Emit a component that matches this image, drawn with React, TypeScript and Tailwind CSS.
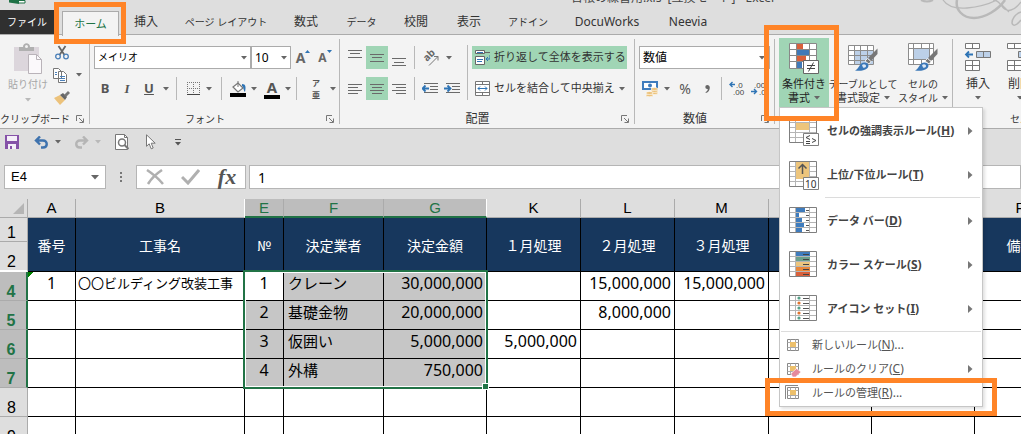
import type { ReactNode } from 'react';
import clsx from 'clsx';

const tabs = [
  { label: '挿入', className: 'w-[54px] text-xs' },
  { label: 'ページ レイアウト', className: 'w-[106px] text-[10px]' },
  { label: '数式', className: 'w-[54px] text-xs' },
  { label: 'データ', className: 'w-[57px] text-[10px]' },
  { label: '校閲', className: 'w-[52px] text-xs' },
  { label: '表示', className: 'w-[54px] text-xs' },
  { label: 'アドイン', className: 'w-[64px] text-[10px]' },
  { label: 'DocuWorks', className: 'w-[94px] text-xs' },
  { label: 'Neevia', className: 'w-[68px] text-xs' },
];

const columns = [
  { letter: 'A', width: 'w-12', title: '番号' },
  { letter: 'B', width: 'w-[169px]', title: '工事名' },
  { letter: 'E', width: 'w-[39px]', title: '№', selected: true },
  { letter: 'F', width: 'w-[100px]', title: '決定業者', selected: true },
  { letter: 'G', width: 'w-[103px]', title: '決定金額', selected: true },
  { letter: 'K', width: 'w-[94px]', title: '１月処理' },
  { letter: 'L', width: 'w-[94px]', title: '２月処理' },
  { letter: 'M', width: 'w-[94px]', title: '３月処理' },
  { letter: 'N', width: 'w-[103px]', title: '' },
  { letter: 'O', width: 'w-[103px]', title: '' },
  { letter: 'P', width: 'w-[92px]', title: '備考' },
];

const rows: { n: number; cells: Record<string, string> }[] = [
  { n: 4, cells: { A: '1', B: '〇〇ビルディング改装工事', E: '1', F: 'クレーン', G: '30,000,000', L: '15,000,000', M: '15,000,000' } },
  { n: 5, cells: { E: '2', F: '基礎金物', G: '20,000,000', L: '8,000,000' } },
  { n: 6, cells: { E: '3', F: '仮囲い', G: '5,000,000', K: '5,000,000' } },
  { n: 7, cells: { E: '4', F: '外構', G: '750,000' } },
  { n: 8, cells: {} },
  { n: 9, cells: {} },
];

function Caret({ light }: { light?: boolean }) {
  return (
    <svg width="6" height="4" viewBox="0 0 6 4" className="shrink-0" fill={light ? '#b9b9b9' : '#666'}>
      <path d="M0 0h6L3 3.5z" />
    </svg>
  );
}

function Launcher() {
  return (
    <button type="button" aria-label="詳細" className="w-5 flex justify-center">
      <svg width="8" height="8" viewBox="0 0 8 8" fill="none" stroke="#777">
        <path d="M.5 6V.5H6M3 3l4 4M7.5 3.5v4h-4" />
      </svg>
    </button>
  );
}

function Separator({ className }: { className?: string }) {
  return <div className={clsx('w-px bg-[#b8b8b8] self-stretch', className)} />;
}

function Slot({ label, className, children }: { label: string; className: string; children: ReactNode }) {
  return (
    <button type="button" aria-label={label} className={clsx('h-full flex items-center justify-center', className)}>
      {children}
    </button>
  );
}

function Group({ label, small, launcher, className, children }: {
  label?: string;
  small?: boolean;
  launcher?: boolean;
  className?: string;
  children: ReactNode;
}) {
  return (
    <section className={clsx('shrink-0 flex flex-col h-[93px] relative', className)}>
      <div className="h-[74px] flex">{children}</div>
      <div className="flex h-[19px] items-center text-[#333]">
        <span className={clsx('flex-1 text-center leading-4', small ? 'text-[10px]' : 'text-xs')}>{label}</span>
        {launcher && <Launcher />}
      </div>
      <div className="absolute right-0 top-1 bottom-1 w-px bg-[#b8b8b8]" />
    </section>
  );
}

function Lines({ rows: list }: { rows: [number, number, number][] }) {
  return (
    <svg width="14" height="18" viewBox="0 0 14 18" stroke="#6a6a6a">
      {list.map(([y, x1, x2]) => (
        <path key={y} d={`M${x1} ${y + 0.5}H${x2}`} />
      ))}
    </svg>
  );
}

function IndentIcon({ right }: { right?: boolean }) {
  return (
    <svg width="16" height="12" viewBox="0 0 16 12" fill="none">
      <path d="M2 .5h14M8 3.5h8M8 6.5h8M2 9.5h14" stroke="#6a6a6a" />
      {right ? (
        <path d="M0 5.5h6M3.5 2.5l3 3-3 3" stroke="#2e74b5" strokeWidth="1.8" />
      ) : (
        <path d="M1 5.5h6M3.5 2.5l-3 3 3 3" stroke="#2e74b5" strokeWidth="1.8" />
      )}
    </svg>
  );
}

function DecimalIcon({ add }: { add?: boolean }) {
  return (
    <svg width="16" height="15" viewBox="0 0 16 15" className="font-['Liberation_Sans',sans-serif]">
      {add ? (
        <>
          <path d="M1 3.5h5M3.5 1L1 3.5 3.5 6" stroke="#2e74b5" strokeWidth="1.4" fill="none" />
          <text x="7" y="7" fontSize="8" fill="#444">.0</text>
          <text x="4" y="14" fontSize="8" fill="#444">.00</text>
        </>
      ) : (
        <>
          <text x="3" y="7" fontSize="8" fill="#444">.00</text>
          <path d="M0 10.5h5M3 8l2.5 2.5L3 13" stroke="#2e74b5" strokeWidth="1.4" fill="none" />
          <text x="8" y="14" fontSize="8" fill="#444">.0</text>
        </>
      )}
    </svg>
  );
}

function ConditionalIcon() {
  return (
    <svg width="30" height="31" viewBox="0 0 30 31">
      <path d="M.5.5h27v25H.5z" fill="#fff" />
      <path d="M8 1h6v6H8z" fill="#d9603b" />
      <path d="M8 7h12v6H8z" fill="#4179b8" />
      <path d="M8 13h9v6H8z" fill="#d9603b" />
      <path d="M8 19h5v6H8z" fill="#4179b8" />
      <path d="M.5.5h27v25H.5zM7.5.5v25M20.5.5v25M.5 6.5h27M.5 12.5h27M.5 18.5h27" fill="none" stroke="#888" />
      <path d="M14.5 17.5h15v13h-15z" fill="#fff" stroke="#666" />
      <path d="M18 22.5h8M18 25.5h8M24.5 19.5l-5 9" stroke="#444" />
    </svg>
  );
}

function Brush() {
  return (
    <g>
      <path d="M29.5 5.5V11L23 18l-3-3z" fill="#777" />
      <path d="M19.5 15.500l3.500 3-2 2.500-4-3z" fill="#777" stroke="#fff" strokeWidth=".8" />
      <path d="M7 27.500c4-1 4-8 9.500-8 4.500 0 5 4 2.500 6-3 2.500-8 2.500-12 2z" fill="#3b78b8" />
      <path d="M14 22c2-1.500 4-.5 4 1s-1.500 2-3 1.500z" fill="#dce8f5" />
    </g>
  );
}

function TableFormatIcon() {
  return (
    <svg width="30" height="31" viewBox="0 0 30 31">
      <path d="M.5 2.500h25v19H.5z" fill="#fff" />
      <path d="M7 8h18v14H7z" fill="#bcd0e8" />
      <path d="M.5 2.500h25v19H.5zM6.500 2.500v19M12.500 2.500v19M19.500 2.500v19M.5 7.500h25M.5 12.500h25M.5 17.500h25" fill="none" stroke="#8c8c8c" />
      <Brush />
    </svg>
  );
}

function CellStyleIcon() {
  return (
    <svg width="30" height="31" viewBox="0 0 30 31">
      <path d="M.5.5h25v21H.5z" fill="#fff" />
      <path d="M.5.5h25v21H.5zM5.500.5v21M21.500.5v21M.5 5.500h25M.5 16.500h25M13.500.5v5M13.500 16.500v5" fill="none" stroke="#8c8c8c" />
      <path d="M6 6h15v10H6z" fill="#bcd0e8" />
      <Brush />
    </svg>
  );
}

function CellsIcon({ remove }: { remove?: boolean }) {
  return (
    <svg width="28" height="28" viewBox="0 0 28 28" fill="none">
      <path d="M1.500.5h14v5h-14zM8.500.5v5M1.500 17.500h14v10h-14zM8.500 17.500v10M1.500 22.500h14" fill="#fff" stroke="#777" />
      <path d="M12.500 8.500h14v6h-14z" fill="#bcd0e8" stroke="#777" />
      <path d="M19.500 8.500v6" stroke="#777" />
      {remove ? (
        <path d="M17 16l9 9M26 16l-9 9" stroke="#d9603b" strokeWidth="2" />
      ) : (
        <path d="M2 11.500h7M5 8.500l-3 3 3 3" stroke="#2e74b5" strokeWidth="1.800" />
      )}
    </svg>
  );
}

function MenuGrid({ children }: { children: ReactNode }) {
  return (
    <svg width="30" height="30" viewBox="0 0 30 30" className="shrink-0">
      <path d="M.5 1.500h27v25H.5z" fill="#fff" />
      <path d="M6.500 1.500v25M20.500 1.500v25M.5 6.500h27M.5 11.500h27M.5 16.500h27M.5 21.500h27" stroke="#b5b5b5" />
      {children}
    </svg>
  );
}

const frame = <path d="M.5 1.500h27v25H.5z" fill="none" stroke="#7f7f7f" />;
const badge = <path d="M14.500 17.500h15v12h-15z" fill="#fff" stroke="#7f7f7f" />;

const ruleItems = [
  {
    label: 'セルの強調表示ルール',
    mnemonic: 'H',
    icon: (
      <MenuGrid>
        <path d="M7 7h13v7H7z" fill="#edc57c" />
        {frame}
        {badge}
        <path d="M21 19.500l-4 2 4 2M17 25.500h4M17 27.500h4M23 22.500l4 2-4 2" fill="none" stroke="#444" />
      </MenuGrid>
    ),
  },
  {
    label: '上位/下位ルール',
    mnemonic: 'T',
    icon: (
      <MenuGrid>
        <path d="M7 2h13v17H7z" fill="#edc57c" />
        {frame}
        <path d="M13.500 14V5M9.500 8.500l4-4 4 4" fill="none" stroke="#555" strokeWidth="1.500" />
        {badge}
        <text x="16" y="27.500" fontSize="10" fontWeight="400" fill="#333">10</text>
      </MenuGrid>
    ),
  },
  {
    label: 'データ バー',
    mnemonic: 'D',
    icon: (
      <MenuGrid>
        <path d="M7 2h9v4H7zM7 7h3v4H7zM7 12h6v4H7zM7 17h8v4H7zM7 22h6v4H7z" fill="#3f7cbd" />
        {frame}
        <path d="M17 4.500h3M17 9.500h3M17 14.500h3M17 19.500h3M17 24.500h3" stroke="#555" />
      </MenuGrid>
    ),
  },
  {
    label: 'カラー スケール',
    mnemonic: 'S',
    icon: (
      <MenuGrid>
        <path d="M7 2h14v4H7z" fill="#3f7cbd" />
        <path d="M7 7h14v4H7z" fill="#6ba08c" />
        <path d="M7 12h14v4H7z" fill="#edc57c" />
        <path d="M7 17h14v4H7z" fill="#e9883a" />
        <path d="M7 22h14v4H7z" fill="#d9603b" />
        {frame}
        <path d="M14 4.500h6M14 9.500h6M14 14.500h6M14 19.500h6M14 24.500h6" stroke="#444" />
      </MenuGrid>
    ),
  },
  {
    label: 'アイコン セット',
    mnemonic: 'I',
    icon: (
      <MenuGrid>
        <g fill="#55a087">
          <circle cx="10" cy="4" r="1.600" />
          <circle cx="10" cy="14" r="1.600" />
          <circle cx="10" cy="24" r="1.600" />
        </g>
        <g fill="#e0742f">
          <circle cx="10" cy="9" r="1.600" />
          <circle cx="10" cy="19" r="1.600" />
        </g>
        {frame}
        <path d="M14 4.500h6M14 9.500h6M14 14.500h6M14 19.500h6M14 24.500h6" stroke="#555" />
      </MenuGrid>
    ),
  },
];

function SmallRuleIcon({ kind }: { kind: 'new' | 'clear' | 'manage' }) {
  return (
    <svg width="16" height="16" viewBox="0 0 16 16" fill="none" className="shrink-0">
      {kind === 'manage' && <path d="M.5 14V.5H13" stroke="#888" />}
      <path d="M2.500 2.500h11v11h-11z" fill="#fff" stroke="#888" />
      <path d="M5.500 2.500v11M10.500 2.500v11M2.500 5.500h11M2.500 10.500h11" stroke="#aaa" />
      <path d="M5 5h6v5H5z" fill="#edc06c" />
      {kind === 'clear' && <path d="M6 12.500l5.500-5L16 11l-5.500 5-3 0z" fill="#e58a9d" stroke="#fff" strokeWidth=".6" />}
    </svg>
  );
}

function SubmenuArrow() {
  return (
    <svg width="5" height="8" viewBox="0 0 5 8" fill="#777" className="ml-auto shrink-0">
      <path d="M0 0l4.500 4L0 8z" />
    </svg>
  );
}

function RulesMenu() {
  return (
    <div role="menu" className="absolute left-0 top-full z-20 w-[204px] bg-white border border-[#c6c6c6] p-px text-[#444] shadow-[2px_2px_3px_rgba(0,0,0,0.12)]">
      {ruleItems.map((item, i) => (
        <div key={item.mnemonic}>
          {i === 2 && <div className="h-px mx-px mb-px ml-11 bg-[#dcdcdc]" />}
          <button type="button" role="menuitem" className="flex items-center w-full h-11 pl-2 pr-2 gap-2 text-[11px] font-bold whitespace-nowrap">
            {item.icon}
            <span>{item.label}<span className="text-xs">(<u>{item.mnemonic}</u>)</span></span>
            <SubmenuArrow />
          </button>
        </div>
      ))}
      <div className="h-px mb-px bg-[#dcdcdc]" />
      <button type="button" role="menuitem" className="flex items-center w-full h-6 pl-1 pr-2 gap-[11px] text-[11px] text-[#555]">
        <SmallRuleIcon kind="new" />
        <span>新しいルール<span className="text-xs">(<u>N</u>)...</span></span>
      </button>
      <button type="button" role="menuitem" className="flex items-center w-full h-6 pl-1 pr-2 gap-[11px] text-[11px] text-[#555]">
        <SmallRuleIcon kind="clear" />
        <span>ルールのクリア<span className="text-xs">(<u>C</u>)</span></span>
        <SubmenuArrow />
      </button>
      <button type="button" role="menuitem" className="flex items-center w-full h-6 pl-1 pr-2 gap-[11px] text-[11px] text-[#555]">
        <SmallRuleIcon kind="manage" />
        <span>ルールの管理<span className="text-xs">(<u>R</u>)...</span></span>
      </button>
    </div>
  );
}

function TitleBar() {
  return (
    <header className="bg-[#dedede] relative">
      <svg width="112" height="28" viewBox="0 0 112 28" fill="none" stroke="#b9b9b9" className="absolute right-0 top-0">
        <path d="M12 0c4 2 8 2 12 0" strokeWidth="2" />
        <path d="M34 0c4 6 12 9 24 8S80 4 88 0" strokeWidth="1.300" />
        <path d="M48 0c-2 10 6 18 17 18s24-8 31-18" strokeWidth="2.500" />
        <path d="M84 0c4 0 6 2 8 5 3 5 6 6 10 5 4-1 7-4 10-8M92 4l8 8" strokeWidth="1.300" />
        <path d="M112 12c-6 2-9 7-9 11 1 4 5 2 9-3" strokeWidth="1.500" />
      </svg>
      <div className="h-[10px] overflow-hidden flex items-start">
        <svg width="17" height="4" viewBox="0 0 17 4" className="ml-[9px]">
          <path d="M0 0h10v4L0 2.500z" fill="#1e7145" />
          <path d="M10 .5h6v2.500h-6" fill="#fff" stroke="#1e7145" />
        </svg>
        <h1 className="flex-1 text-center text-xs leading-3 -mt-2 pl-[298px] whitespace-pre text-[#444]">台帳の練習用.xls  [互換モード] - Excel</h1>
      </div>
      <nav className="flex h-[25px] border-b border-[#ababab] text-[#333]">
        <button type="button" className="w-[54px] bg-[#303030] text-white text-[10px]">ファイル</button>
        <div className="relative ml-2">
          <button type="button" className="w-[57px] h-[25px] bg-[#f3f3f3] border border-b-0 border-[#ababab] text-[11px] text-[#217346]">ホーム</button>
          <div className="absolute -left-2 -top-2 w-[72px] h-[42px] border-[5px] border-[#ff8427] z-10 pointer-events-none" />
        </div>
        {tabs.map((tab) => (
          <button type="button" key={tab.label} className={clsx('shrink-0 whitespace-nowrap', tab.className)}>{tab.label}</button>
        ))}
      </nav>
    </header>
  );
}

function ClipboardGroup() {
  return (
    <Group label="クリップボード" small launcher className="w-[90px]">
      <button type="button" className="w-12 pt-2 ml-1 flex flex-col items-center text-[10px] leading-3 text-[#a6a6a6]">
        <svg width="28" height="31" viewBox="0 0 28 31" fill="none">
          <path d="M0 4h25v24H0z" fill="#dcd6dc" />
          <path d="M5 4h4c0-5 7-5 7 0h4v4H5z" fill="#b0b0b0" />
          <circle cx="12.500" cy="3.500" r="1.500" fill="#f3f3f3" />
          <path d="M14.500 11.500h8l5 5v14h-13z" fill="#fbf9fb" stroke="#b9b3b9" />
          <path d="M22.500 11.500v5h5" stroke="#b9b3b9" />
        </svg>
        <span className="mt-1 mb-2">貼り付け</span>
        <Caret light />
      </button>
      <div className="flex flex-col pt-[6px]">
        <Slot label="切り取り" className="w-5 max-h-6">
          <svg width="14" height="15" viewBox="0 0 14 15" fill="none">
            <path d="M3.500 1l6 9M10.500 1l-6 9" stroke="#666" strokeWidth="1.800" />
            <circle cx="3" cy="11.500" r="2.300" stroke="#4a7fb8" strokeWidth="1.300" />
            <circle cx="11" cy="11.500" r="2.300" stroke="#4a7fb8" strokeWidth="1.300" />
          </svg>
        </Slot>
        <Slot label="コピー" className="max-h-6 gap-2">
          <svg width="16" height="15" viewBox="0 0 16 15" fill="#fff" stroke="#777">
            <path d="M1.500.5h5l3 3v7h-8zM6.500 3.500h5l3 3v8h-8z" />
            <path d="M3 4.500h2M3 6.500h2M8 8.500h5M8 10.500h5M8 12.500h5" stroke="#4a7fb8" />
          </svg>
          <Caret />
        </Slot>
        <Slot label="書式のコピー" className="w-5 max-h-6">
          <svg width="16" height="14" viewBox="0 0 16 14">
            <path d="M0 7l6-3 5 5-5 5z" fill="#ecc27b" />
            <path d="M6 4l3-2 4 4-2 3z" fill="#666" />
            <path d="M10 4l4-4 2 2-4 4z" fill="#777" />
          </svg>
        </Slot>
      </div>
    </Group>
  );
}

function FontGroup() {
  return (
    <Group label="フォント" small launcher className="w-[250px]">
      <div className="flex flex-col gap-2 pt-[11px] pl-1">
        <div className="flex h-[23px] items-center">
          <div className="relative">
            <select aria-label="フォント名" className="appearance-none block w-[157px] h-[23px] bg-white border border-[#ababab] pl-[3px] text-[10px] text-black">
              <option>メイリオ</option>
            </select>
            <div className="absolute right-1 top-[10px] pointer-events-none"><Caret /></div>
          </div>
          <div className="relative">
            <select aria-label="サイズ" className="appearance-none block w-10 h-[23px] bg-white border border-[#ababab] pl-[3px] text-xs text-black">
              <option>10</option>
            </select>
            <div className="absolute right-1 top-[10px] pointer-events-none"><Caret /></div>
          </div>
          <Slot label="拡大" className="w-6 text-sm font-bold text-[#666]">
            A<svg width="5" height="3" viewBox="0 0 5 3" className="mb-3" fill="#2e74b5"><path d="M0 3h5L2.500 0z" /></svg>
          </Slot>
          <Slot label="縮小" className="w-5 text-xs font-bold text-[#666]">
            A<svg width="5" height="3" viewBox="0 0 5 3" className="mb-3" fill="#2e74b5"><path d="M0 0h5L2.500 3z" /></svg>
          </Slot>
        </div>
        <div className="flex h-[23px] items-center text-[#555]">
          <Slot label="太字" className="w-[22px] text-[13px] font-bold">B</Slot>
          <Slot label="斜体" className="w-[22px] text-[13px] font-bold italic font-['Liberation_Serif',serif]">I</Slot>
          <Slot label="下線" className="w-[22px] text-[13px] font-bold underline">U</Slot>
          <Slot label="下線の種類" className="w-3"><Caret /></Slot>
          <Separator className="mx-1" />
          <Slot label="罫線" className="w-6">
            <svg width="13" height="13" viewBox="0 0 13 13" stroke="#777" fill="none">
              <path d="M.5 0v12M6.500 0v12M12.500 0v12M0 .5h13M0 6.500h13" strokeDasharray="1 1" />
              <path d="M0 12.500h13" stroke="#444" />
            </svg>
          </Slot>
          <Slot label="罫線の種類" className="w-2"><Caret /></Slot>
          <Separator className="ml-2 mr-1" />
          <Slot label="塗りつぶし" className="w-6">
            <svg width="17" height="16" viewBox="0 0 17 16" fill="none">
              <path d="M3 6l5-4 5 5-5 4z" fill="#fff" stroke="#777" strokeWidth="1.200" />
              <path d="M8 6V0" stroke="#777" />
              <path d="M12 3c4 0 4 3 3 8-2-2-1-5-3-6z" fill="#2e74b5" />
              <path d="M0 12h16v4H0z" fill="#000" />
            </svg>
          </Slot>
          <Slot label="塗りつぶしの色" className="w-2"><Caret /></Slot>
          <Slot label="フォントの色" className="w-6 ml-[2px]">
            <span className="h-5 w-4 text-[15px] leading-4 font-bold text-center border-b-4 border-black">A</span>
          </Slot>
          <Slot label="フォントの色の種類" className="w-2"><Caret /></Slot>
          <Separator className="ml-1 mr-2" />
          <Slot label="ふりがな" className="w-[22px] flex-col text-[8px] font-bold">
            <span className="leading-3">ア</span><span className="leading-3">亜</span>
          </Slot>
          <Slot label="ふりがなの種類" className="w-3"><Caret /></Slot>
        </div>
      </div>
    </Group>
  );
}

function AlignmentGroup() {
  return (
    <Group label="配置" launcher className="w-[295px]">
      <div className="flex flex-col gap-2 pt-[11px] pl-1 w-[127px]">
        <div className="flex h-[23px]">
          <Slot label="上揃え" className="w-[22px]"><Lines rows={[[1, 0, 14], [4, 2, 12], [8, 0, 14]]} /></Slot>
          <Slot label="上下中央揃え" className="w-[22px] bg-[#a0d5b5]"><Lines rows={[[5, 0, 14], [8, 2, 12], [12, 0, 14]]} /></Slot>
          <Slot label="下揃え" className="w-[22px]"><Lines rows={[[9, 0, 14], [13, 2, 12], [16, 0, 14]]} /></Slot>
          <Separator className="ml-1 mr-1" />
          <Slot label="方向" className="w-6">
            <svg width="18" height="18" viewBox="0 0 18 18" className="overflow-visible">
              <text fontSize="10" fontWeight="bold" fill="#666" transform="translate(5 13) rotate(-45)">ab</text>
              <path d="M7 16.500L16 7.500M12 7.500h4v4" fill="none" stroke="#777" />
            </svg>
          </Slot>
          <Slot label="方向の種類" className="w-3"><Caret /></Slot>
        </div>
        <div className="flex h-[23px]">
          <Slot label="左揃え" className="w-[22px]"><Lines rows={[[4, 0, 14], [7, 0, 10], [10, 0, 14], [13, 0, 10]]} /></Slot>
          <Slot label="中央揃え" className="w-[22px] bg-[#a0d5b5]"><Lines rows={[[4, 0, 14], [7, 2, 12], [10, 0, 14], [13, 2, 12]]} /></Slot>
          <Slot label="右揃え" className="w-[22px]"><Lines rows={[[4, 0, 14], [7, 4, 14], [10, 0, 14], [13, 4, 14]]} /></Slot>
          <Separator className="ml-1 mr-1" />
          <Slot label="インデントを減らす" className="w-[22px]"><IndentIcon /></Slot>
          <Slot label="インデントを増やす" className="w-[22px]"><IndentIcon right /></Slot>
        </div>
      </div>
      <div className="w-px h-[55px] mt-[10px] bg-[#b8b8b8]" />
      <div className="flex flex-col gap-2 pt-[11px] pl-1 flex-1 text-[#333] text-[11px]">
        <button type="button" className="flex items-center h-[23px] w-[155px] pl-[3px] gap-1 bg-[#a0d5b5] whitespace-nowrap">
          <svg width="15" height="15" viewBox="0 0 15 15" fill="#fff" stroke="#666" className="shrink-0">
            <path d="M.5.5h9v3h-9zM.5 6.500h9v8h-9z" />
            <path d="M10 2.500h5" />
            <path d="M2 2.500h6M2 9.500h6M2 11.500h5M15 5v4h-4M13 7l-2 2 2 2" stroke="#2e74b5" fill="none" />
          </svg>
          折り返して全体を表示する
        </button>
        <button type="button" className="flex items-center h-[23px] w-[155px] pl-[3px] gap-1 whitespace-nowrap">
          <svg width="15" height="15" viewBox="0 0 15 15" fill="#fff" stroke="#777" className="shrink-0">
            <path d="M.5.5h14v14H.5zM.5 3.500h14M.5 11.500h14M7.500.5v3M7.500 11.500v3" />
            <path d="M3 7.500h9M5 5.500l-2 2 2 2M10 5.500l2 2-2 2" stroke="#2e74b5" fill="none" />
          </svg>
          セルを結合して中央揃え
          <Caret />
        </button>
      </div>
    </Group>
  );
}

function NumberGroup() {
  return (
    <Group label="数値" launcher className="w-[140px]">
      <div className="flex flex-col gap-2 pt-[11px] pl-1">
        <div className="relative">
          <select aria-label="表示形式" className="appearance-none block w-[131px] h-[23px] bg-white border border-[#ababab] pl-[3px] text-xs text-black">
            <option>数値</option>
          </select>
          <div className="absolute right-[5px] top-[10px] pointer-events-none"><Caret /></div>
        </div>
        <div className="flex h-[23px]">
          <Slot label="通貨" className="w-[22px]">
            <svg width="17" height="16" viewBox="0 0 17 16">
              <path d="M0 0h16v9H0z" fill="#3f7cbd" />
              <path d="M2 2h12v5H2z" fill="#fff" />
              <circle cx="8" cy="4.500" r="2" fill="#3f7cbd" />
              <g fill="#ecc27b" stroke="#fff" strokeWidth=".6">
                <ellipse cx="12.500" cy="12" rx="3.500" ry="1.500" />
                <ellipse cx="12.500" cy="10" rx="3.500" ry="1.500" />
                <ellipse cx="12.500" cy="8" rx="3.500" ry="1.500" />
                <ellipse cx="7.500" cy="14.200" rx="3.500" ry="1.500" />
                <ellipse cx="7.500" cy="12" rx="3.500" ry="1.500" />
              </g>
            </svg>
          </Slot>
          <Slot label="通貨の種類" className="w-3"><Caret /></Slot>
          <Slot label="パーセント" className="w-6 text-sm text-[#555]">%</Slot>
          <Slot label="桁区切り" className="w-5 text-[#666]">
            <svg width="5" height="8" viewBox="0 0 5 8" fill="currentColor">
              <path d="M2.300 0A2 2 0 0 0 2.300 4h.5C2.600 5.500 2 6.500.5 7.200l.4.8C3.500 7 4.800 5 4.800 2.400 4.800.900 3.700 0 2.300 0z" />
            </svg>
          </Slot>
          <Separator className="mx-1" />
          <Slot label="小数点以下を増やす" className="w-[22px]"><DecimalIcon add /></Slot>
          <Slot label="小数点以下を減らす" className="w-[22px]"><DecimalIcon /></Slot>
        </div>
      </div>
    </Group>
  );
}

function StylesGroup() {
  return (
    <Group className="w-[178px]">
      <div className="relative h-[69px] mt-[3px] ml-1">
        <button type="button" aria-haspopup="menu" aria-expanded="true" className="w-[50px] h-[69px] pt-[5px] bg-[#a0d5b5] flex flex-col items-center text-[11px] leading-[14px] text-[#222]">
          <ConditionalIcon />
          <span className="mt-[3px]">条件付き</span>
          <span className="flex items-center gap-1">書式<Caret /></span>
        </button>
        <RulesMenu />
        <div className="absolute -left-[15px] -top-[13px] w-[75px] h-[96px] border-[5px] border-[#ff8427] z-30 pointer-events-none" />
        <div className="absolute -left-[14px] top-[340px] w-[232px] h-[38px] border-[5px] border-[#ff8427] z-30 pointer-events-none" />
      </div>
      <button type="button" className="w-[68px] pt-2 flex flex-col items-center text-[10px] leading-[14px] text-[#333] whitespace-nowrap">
        <TableFormatIcon />
        <span className="mt-[3px]">テーブルとして</span>
        <span className="flex items-center gap-1 text-[11px]">書式設定<Caret /></span>
      </button>
      <button type="button" className="w-[52px] pt-2 flex flex-col items-center text-[10px] leading-[14px] text-[#333] whitespace-nowrap">
        <CellStyleIcon />
        <span className="mt-[3px]">セルの</span>
        <span className="flex items-center gap-1">スタイル<Caret /></span>
      </button>
    </Group>
  );
}

function CellsGroup() {
  return (
    <Group label="セル" small className="w-[134px]">
      {['挿入', '削除', '書式'].map((label) => (
        <button type="button" key={label} className="w-[42px] first:ml-1 pt-2 flex flex-col items-center text-xs leading-[14px] text-[#333]">
          <CellsIcon remove={label === '削除'} />
          <span className="mt-[6px] mb-[5px]">{label}</span>
          <Caret />
        </button>
      ))}
    </Group>
  );
}

function QuickAccess() {
  return (
    <div className="flex h-[26px] items-center pl-[5px]">
      <button type="button" aria-label="上書き保存" className="w-[26px]">
        <svg width="14" height="14" viewBox="0 0 14 14">
          <path d="M0 0h14v14H0z" fill="#8551a8" />
          <path d="M2 1h10v5H2zM3 9h8v5H3z" fill="#f4eef8" />
          <path d="M5 11h2v3H5z" fill="#8551a8" />
        </svg>
      </button>
      <button type="button" aria-label="元に戻す" className="flex items-center w-10 gap-[6px] pl-[3px]">
        <svg width="15" height="13" viewBox="0 0 15 13" fill="none" stroke="#3f73ae" strokeWidth="2.400">
          <path d="M2 4.500h7c5 0 5 7 0 7H7M6 .5l-4 4 4 4" />
        </svg>
        <Caret />
      </button>
      <button type="button" aria-label="やり直し" className="flex items-center w-11 gap-[6px] pl-[3px]">
        <svg width="15" height="13" viewBox="0 0 15 13" fill="none" stroke="#b5b5b5" strokeWidth="2.400">
          <path d="M13 4.500H6c-5 0-5 7 0 7h2M9 .5l4 4-4 4" />
        </svg>
        <Caret light />
      </button>
      <button type="button" aria-label="印刷プレビュー" className="w-[31px]">
        <svg width="15" height="16" viewBox="0 0 15 16" fill="#fff" stroke="#777">
          <path d="M.5.5h9l3 3v12H.5z" />
          <path d="M9.500.5v3h3" fill="none" />
          <circle cx="7" cy="8.500" r="3.500" strokeWidth="1.500" />
          <path d="M9.500 11l4 4" strokeWidth="2" />
        </svg>
      </button>
      <button type="button" aria-label="選択" className="w-[29px]">
        <svg width="10" height="16" viewBox="0 0 10 16" fill="#fff" stroke="#777">
          <path d="M.5.800v11.500l2.700-2.500 2 5 2-.8-2-4.800h4z" />
        </svg>
      </button>
      <button type="button" aria-label="カスタマイズ">
        <svg width="6" height="7" viewBox="0 0 6 7" fill="#555">
          <path d="M0 0h6v1H0zM0 3h6L3 6.500z" />
        </svg>
      </button>
    </div>
  );
}

function FormulaBar() {
  return (
    <div className="flex pt-[10px] pb-[10px] pl-1 h-11">
      <label className="flex items-center w-[102px] h-6 bg-white border border-[#b5b5b5] pl-[6px] pr-[6px]">
        <input aria-label="名前ボックス" defaultValue="E4" className="w-0 flex-1 outline-none text-[13px] text-black font-['Liberation_Sans',sans-serif]" />
        <svg width="8" height="5" viewBox="0 0 8 5" fill="#666"><path d="M0 0h8L4 4.500z" /></svg>
      </label>
      <svg width="30" height="24" viewBox="0 0 30 24" fill="#777">
        <path d="M14 7h2v2h-2zM14 11h2v2h-2zM14 15h2v2h-2z" />
      </svg>
      <div className="flex items-center justify-around w-[110px] h-6 bg-white border border-[#b5b5b5]">
        <button type="button" aria-label="キャンセル">
          <svg width="18" height="16" viewBox="0 0 18 16" fill="none" stroke="#b0b0b0" strokeWidth="2.500"><path d="M1 1c6 4 11 8 16 14M16 1C10 5 5 10 2 15" /></svg>
        </button>
        <button type="button" aria-label="入力">
          <svg width="19" height="16" viewBox="0 0 19 16" fill="none" stroke="#b0b0b0" strokeWidth="3"><path d="M1 8l6 6L18 1" /></svg>
        </button>
        <button type="button" className="font-['Liberation_Serif',serif] italic font-bold text-[22px] leading-5 text-[#555]">fx</button>
      </div>
      <input aria-label="数式バー" defaultValue="1" className="ml-[3px] flex-1 min-w-0 h-6 bg-white border border-[#b5b5b5] pl-2 outline-none text-sm text-black" />
    </div>
  );
}

function Sheet() {
  return (
    <div className="relative">
      <table className="table-fixed border-separate border-spacing-0 w-[1067px] bg-white text-black">
        <colgroup>
          <col className="w-7" />
          {columns.map((c) => <col key={c.letter} className={c.width} />)}
        </colgroup>
        <thead>
          <tr className="h-[19px] font-['Liberation_Sans',sans-serif] text-[15px] leading-4">
            <th className="bg-[#dedede] border-r border-b border-[#ababab] p-0">
              <svg width="11" height="11" viewBox="0 0 11 11" fill="#b5b5b5" className="ml-[13px]"><path d="M11 0v11H0z" /></svg>
            </th>
            {columns.map((c) => (
              <th
                key={c.letter}
                className={clsx(
                  'p-0 font-normal border-r',
                  c.selected ? 'bg-[#bdbdbd] text-[#217346] border-b-2 border-b-[#217346]' : 'bg-[#dedede] border-b border-b-[#ababab]',
                  c.letter === 'B' || c.letter === 'G' ? 'border-r-white' : 'border-r-[#ababab]',
                )}
              >
                {c.letter}
              </th>
            ))}
          </tr>
          <tr className="h-6">
            <th className="bg-[#dedede] border-r border-b border-[#ababab] p-0 pr-1 align-bottom font-normal font-['Liberation_Sans',sans-serif] text-base leading-4">1</th>
            {columns.map((c) => (
              <th key={c.letter} rowSpan={2} className="bg-[#17375d] text-white border-r border-b border-black p-0 font-normal text-sm font-['Noto_Sans_CJK_JP',sans-serif]">
                {c.title}
              </th>
            ))}
          </tr>
          <tr className="h-[30px]">
            <th className="bg-[#dedede] border-r border-r-[#ababab] border-b-2 border-b-white p-0 pr-1 align-bottom font-normal font-['Liberation_Sans',sans-serif] text-base leading-4">2</th>
          </tr>
        </thead>
        <tbody>
          {rows.map(({ n, cells }) => {
            const inRange = n <= 7;
            return (
              <tr key={n} className="h-[29px]">
                <th
                  className={clsx(
                    "p-0 pr-1 align-bottom text-base leading-4 font-['Liberation_Sans',sans-serif] border-b border-b-[#ababab]",
                    inRange ? 'bg-[#bdbdbd] text-[#217346] font-bold border-r-2 border-r-[#217346]' : 'bg-[#dedede] font-normal border-r border-r-[#ababab]',
                  )}
                >
                  {n}
                </th>
                {columns.map(({ letter, selected }) => (
                  <td
                    key={letter}
                    className={clsx(
                      'border-r border-b border-black p-0 pb-[6px] align-middle leading-5 whitespace-nowrap',
                      selected && inRange && !(letter === 'E' && n === 4) && 'bg-[#c6c6c6]',
                      letter === 'A' && n === 4 && 'bg-[linear-gradient(135deg,#008000_4px,transparent_4px)]',
                      letter === 'B' && 'text-[13px] pl-[2px]',
                      letter === 'F' && 'text-[15px] pl-1',
                      (letter === 'A' || letter === 'E') && 'text-base text-center',
                      letter >= 'G' && 'text-base text-right pr-[3px]',
                    )}
                  >
                    {cells[letter]}
                  </td>
                ))}
              </tr>
            );
          })}
        </tbody>
      </table>
      <div className="absolute left-[243px] top-[71px] w-[245px] h-[119px] border-2 border-[#217346] pointer-events-none">
        <div className="h-full border border-white" />
        <div className="absolute -right-[3px] -bottom-[3px] w-[7px] h-[7px] bg-[#217346] border border-white" />
      </div>
    </div>
  );
}

export default function App() {
  return (
    <div className="h-screen overflow-hidden bg-[#dedede] font-['Noto_Sans','Noto_Sans_CJK_JP',sans-serif]">
      <TitleBar />
      <div className="flex bg-[#f3f3f3] border-b border-[#ababab]">
        <ClipboardGroup />
        <FontGroup />
        <AlignmentGroup />
        <NumberGroup />
        <StylesGroup />
        <CellsGroup />
      </div>
      <QuickAccess />
      <FormulaBar />
      <Sheet />
    </div>
  );
}
